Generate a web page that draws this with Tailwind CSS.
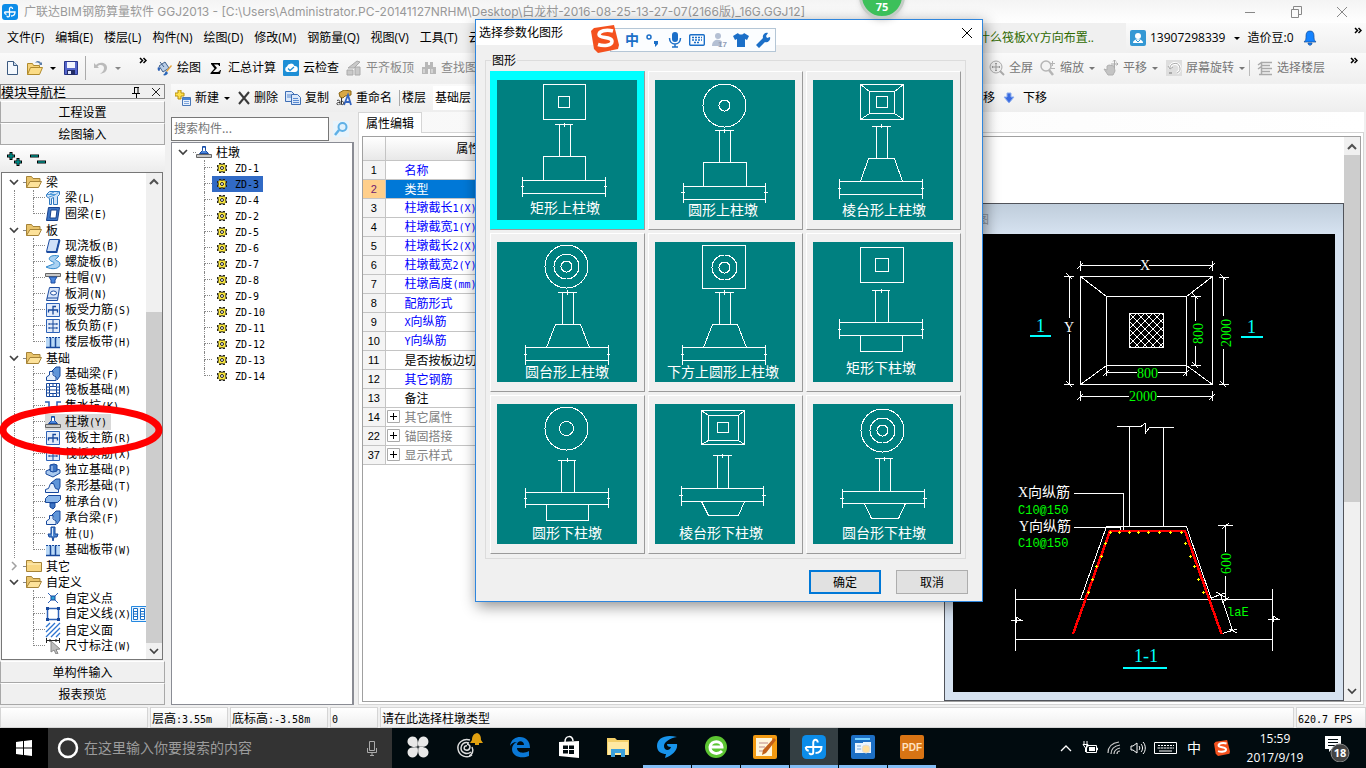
<!DOCTYPE html>
<html lang="zh-CN">
<head>
    <meta charset="UTF-8">
    <meta name="viewport" content="width=device-width, initial-scale=1.0">
    <title>广联达BIM钢筋算量软件 GGJ2013</title>
    <script src="https://cdn.jsdelivr.net/npm/@tailwindcss/browser@4"></script>
</head>
<body class="relative flex h-screen flex-col overflow-hidden bg-[#f0f0f0] font-['Open_Sans','Noto_Sans_CJK_SC',sans-serif] text-xs leading-4 text-black">
    <!-- Icon sprite -->
    <svg class="hidden" xmlns="http://www.w3.org/2000/svg">
        <symbol id="logo" viewBox="0 0 16 16"><rect width="16" height="16" rx="3" fill="#0c8ce8"/><path d="M10.500 5C10.500 2.500 7.500 2.500 7.500 5v6.500c0 1.800-2.500 1.800-2.500.3M2.500 8H13c0 2.500-1.500 4-4 4M2.500 8c0 1.500.8 2.300 2 2.500" fill="none" stroke="#fff" stroke-width="1.300"/></symbol>
        <symbol id="caret" viewBox="0 0 8 16"><path d="M1 7h6L4 10z" fill="currentColor"/></symbol>
        <symbol id="more" viewBox="0 0 8 8"><path d="M1 1l2.500 2.500L1 6M4.500 1L7 3.500 4.500 6" fill="none" stroke="currentColor" stroke-width="1.500"/></symbol>
        <symbol id="new" viewBox="0 0 16 16"><path d="M2.500 1.500h6l4 4v9h-10z" fill="#f4f8fd" stroke="#3c5a80"/><path d="M8.500 1.500v4h4" fill="#c8d8ec" stroke="#3c5a80"/></symbol>
        <symbol id="open" viewBox="0 0 16 16"><path d="M.5 14.500v-11h5l1 2h6v2" fill="#f5d27a" stroke="#b08a2c"/><path d="M.5 14.500l3-7h12l-3 7z" fill="#fbdc86" stroke="#b08a2c"/><path d="M8 3c2-3 5-2 6 0l1-1v3h-3l1-1c-1-1-3-2-5-1z" fill="#5b7da8"/></symbol>
        <symbol id="save" viewBox="0 0 16 16"><path d="M1.500 1.500h13v13h-13z" fill="#5566cc" stroke="#28358a"/><path d="M4 2h8v6H4z" fill="#f2f5ff"/><path d="M4 10h8v5H4z" fill="#222c66"/><path d="M5 11h3v3H5z" fill="#dfe5fa"/></symbol>
        <symbol id="undo" viewBox="0 0 16 16"><path d="M2 3v5h5L5.500 6.500C8 4 12 5 12 8s-2 4-4 6c5-1 7-3 7-6.500C15 3 8 1 4 5z" fill="#bbb"/></symbol>
        <symbol id="paint" viewBox="0 0 16 16"><path d="M2 6l6-4 4 6-6 4z" fill="#b9cde6" stroke="#41618c"/><path d="M3 2l4 5" stroke="#41618c"/><path d="M1 7c-1 2 0 4 1 4s1-2 1-3z" fill="#2f62b5"/><path d="M14 5l1 1-5 6-1-1z" fill="#e7a43a"/><path d="M9 11l2 2c-1 2-3 3-5 2 2-1 2-3 3-4z" fill="#2a66b8"/></symbol>
        <symbol id="sum" viewBox="0 0 16 16"><path d="M3 3h9v3h-1c0-1-1-1.500-2-1.500H6L9 8l-4 4h4.500c1.500 0 2-1 2.500-2h1l-1 4H2.500v-1L6.500 8.500 3 4z" fill="#000"/></symbol>
        <symbol id="cloud" viewBox="0 0 16 16"><rect width="16" height="16" rx="1" fill="#1e8fd6"/><path d="M4 12a3 3 0 0 1 0-5.500A4 4 0 0 1 11.500 6 3 3 0 0 1 12 12z" fill="#fff"/><path d="M5 8.500l2 2 4-3.500" fill="none" stroke="#1e8fd6" stroke-width="1.300"/></symbol>
        <symbol id="slab" viewBox="0 0 16 16"><path d="M2 8l9-7 3 1-6 6zM1 10h6v5H1zM9 7h5v8H9z" fill="#c9c9c9" stroke="#aaa"/></symbol>
        <symbol id="find" viewBox="0 0 16 16"><path d="M4 2h3v5H4zM9 2h3v5H9zM1 7h6v7H1zM9 7h6v7H9zM7 5h2v4H7z" fill="#b8b8b8"/><path d="M3 9v4M11 9v4" stroke="#eee"/></symbol>
        <symbol id="full" viewBox="0 0 16 16"><circle cx="7" cy="7" r="6" fill="#eee" stroke="#aaa"/><path d="M7 3v8M3 7h8M6 4l1-1 1 1M6 10l1 1 1-1M4 6L3 7l1 1M10 6l1 1-1 1" stroke="#999" fill="none"/><path d="M11 11l4 4" stroke="#aaa" stroke-width="2"/></symbol>
        <symbol id="zoom" viewBox="0 0 16 16"><circle cx="6" cy="6" r="5" fill="#f3f3f3" stroke="#b5b5b5" stroke-width="1.500"/><path d="M9 10l4 5" stroke="#b5b5b5" stroke-width="2.500"/><path d="M12.500 1v5M10 3.500h5M11 8.500h4" stroke="#b5b5b5"/></symbol>
        <symbol id="pan" viewBox="0 0 16 16"><path d="M1 9l3 1V6l2-1 5 1 1 5-2 4H5z" fill="#c4c4c4" stroke="#b0b0b0"/><path d="M11.500 0v8M8 4h7M10 1.500L11.500 0 13 1.500M13.500 2.500L15 4l-1.500 1.500" fill="none" stroke="#aaa"/></symbol>
        <symbol id="rotate" viewBox="0 0 16 16"><path d="M0 0h16v16H0z" fill="#dedede"/><path d="M4 9a5 5 0 1 1 7 4" fill="none" stroke="#fff" stroke-width="3"/><path d="M4 9a5 5 0 1 1 7 4M2 6l2 3 3-2" fill="none" stroke="#aaa"/><path d="M3 12h3v2H3z" fill="#aaa"/></symbol>
        <symbol id="floors" viewBox="0 0 16 16"><path d="M4 2.500h11M4 5.500h9M4 8.500h11M4 11.500h9M2 14.500h13M4.500 2v12M1 5l4-3M1 9l4-3" stroke="#aaa" stroke-width="1.500" fill="none"/></symbol>
        <symbol id="add" viewBox="0 0 16 16"><path d="M3 0h3v3h3v3H6v3H3V6H0V3h3z" fill="#ffe14d" stroke="#b8900f"/><path d="M7.500 7.500h8v8h-8z" fill="#eaf2fc" stroke="#4a78b8"/><path d="M8 8h7v2H8z" fill="#4a86d8"/><path d="M9 11.500h5M9 13.500h5" stroke="#7fa6dc"/></symbol>
        <symbol id="del" viewBox="0 0 12 16"><path d="M1 2l10 12M11 2L1 14" stroke="#3a3a3a" stroke-width="2"/></symbol>
        <symbol id="copy" viewBox="0 0 16 16"><path d="M.5 1.500h6l3 3v7h-9z" fill="#dbe8fa" stroke="#3f6fb5"/><path d="M6.500 4.500h6l3 3v7h-9z" fill="#dbe8fa" stroke="#3f6fb5"/><path d="M2 5h4M2 7h4M8 8.500h5M8 10.500h6M8 12.500h6" stroke="#5b8bd0"/></symbol>
        <symbol id="rename" viewBox="0 0 16 16"><path d="M3 3l5-3 7 1v4l-6 1-2 2-3-1z" fill="#d8a845" stroke="#8a6514"/><path d="M8 15l4-10 3 10M9.500 12h5" fill="none" stroke="#3465c0" stroke-width="1.800"/><path d="M1 10.500c3-1 3 0 3 4.500M4 12.500c-4-.5-4 2.500-1.500 2.200M5.500 8v6.500c3 1 3-4 0-3" fill="none" stroke="#333"/></symbol>
        <symbol id="down" viewBox="0 0 16 16"><path d="M6 3h4v4h3l-5 6-5-6h3z" fill="#3a6be0" stroke="#8fb0ee"/></symbol>
        <symbol id="user" viewBox="0 0 16 16"><rect width="16" height="16" rx="2" fill="#3498d4"/><circle cx="8" cy="6" r="3" fill="#fff"/><path d="M3 13c0-5 10-5 10 0z" fill="#fff"/><path d="M6 10l2 2 2-2" stroke="#3498d4" fill="none"/></symbol>
        <symbol id="bell" viewBox="0 0 16 16"><path d="M8 1c3 0 4 2 4 5 0 3 0 4 2 6H2c2-2 2-3 2-6 0-3 1-5 4-5zM6 13h4c0 3-4 3-4 0z" fill="#1583ff" stroke="#174e94" stroke-width=".7"/></symbol>
        <symbol id="chev-d" viewBox="0 0 12 16"><path d="M2 6l4 4 4-4" fill="none" stroke="#404040" stroke-width="1.700"/></symbol>
        <symbol id="chev-r" viewBox="0 0 12 16"><path d="M4 4l4 4-4 4" fill="none" stroke="#a0a0a0" stroke-width="1.500"/></symbol>
        <symbol id="chev-u" viewBox="0 0 12 16"><path d="M2 10l4-4 4 4" fill="none" stroke="#505050" stroke-width="2"/></symbol>
        <symbol id="folder-open" viewBox="0 0 16 16"><path d="M.5 13.500v-11h5l1.500 2h7v3" fill="#e9c46c" stroke="#a58338"/><path d="M.5 13.500l3.500-6h11.500l-3 6z" fill="#fde29a" stroke="#a58338"/></symbol>
        <symbol id="folder" viewBox="0 0 16 16"><path d="M.5 13.500v-11h5l1.500 2h8.500v9z" fill="#f8d682" stroke="#a58338"/><path d="M1 6h14" stroke="#fff0c0"/></symbol>
        <symbol id="t-beam" viewBox="0 0 16 16"><path d="M1.500 4.500l3-3h10v3l-2 2v8h-4v-7l-2 1v6h-2v-6l-3-2z" fill="#cfe3f8" stroke="#2e78c0"/><path d="M2 4.500h9l3-3M5 4l4-2M4 7l6-2" fill="none" stroke="#4c98d8"/></symbol>
        <symbol id="t-ring" viewBox="0 0 16 16"><path d="M3.500 1.500h11l-2 13h-11z" fill="#3c74c4" stroke="#17408c"/><path d="M6 4h6l-1 8H5z" fill="#fff" stroke="#17408c"/></symbol>
        <symbol id="t-slab" viewBox="0 0 16 16"><path d="M4.500 1.500h10l-3 12h-10z" fill="#cfe0f8" stroke="#1c4ca0"/><path d="M1.500 14h10l3-12" stroke="#1c4ca0" fill="none" stroke-width="2"/></symbol>
        <symbol id="t-spiral" viewBox="0 0 16 16"><path d="M14 2C5 0 2 5 6 7s5 2 0 4l-5 2c6 3 14 2 14-3 0-4-8-3-3-6z" fill="#a9d2f3" stroke="#3289cc"/></symbol>
        <symbol id="t-cap" viewBox="0 0 16 16"><path d="M.5 3.500h15v3H.5z" fill="#c8c8c8" stroke="#666"/><path d="M4 7h8l-2 3v3H6v-3z" fill="#4a86dc" stroke="#1c4ca0"/></symbol>
        <symbol id="t-hole" viewBox="0 0 16 16"><path d="M4.500 1.500h10l-2 13h-11z" fill="#d6e4f9" stroke="#1c4ca0"/><ellipse cx="8.500" cy="7" rx="3" ry="2" fill="#fff" stroke="#1c4ca0"/><path d="M2 12h11" stroke="#1c4ca0"/></symbol>
        <symbol id="t-rebar" viewBox="0 0 16 16"><path d="M1.500 1.500h13v13h-13z" fill="#e3ecfa" stroke="#2d62b8"/><path d="M11 4.500H8v8M3.500 10.500v-2.500h9v2.500" stroke="#17489c" stroke-width="1.300" fill="none"/></symbol>
        <symbol id="t-neg" viewBox="0 0 16 16"><path d="M1.500 1.500h13v13h-13z" fill="#e3ecfa" stroke="#2d62b8"/><path d="M8 2v12M4 6h8M4 10h8M4 5v2M12 5v2M4 9v2M12 9v2" stroke="#17489c"/></symbol>
        <symbol id="t-band" viewBox="0 0 16 16"><path d="M1 3h14v10H1z" fill="#b9d8f6"/><path d="M1 13.500h14" stroke="#17489c" stroke-width="1.500"/><path d="M5.500 4v9M10.500 4v9" stroke="#17489c" stroke-width="1.500"/><path d="M1 3.500h14" stroke="#17489c" stroke-dasharray="2 1"/></symbol>
        <symbol id="t-fbeam" viewBox="0 0 16 16"><path d="M7 5l4-4h4v9l-3 4" fill="#5f95d8" stroke="#17489c"/><path d="M1.500 14.500V11l3-2V5.500H8V9l3 2v3.500z" fill="#e6f0fc" stroke="#17489c"/></symbol>
        <symbol id="t-raft" viewBox="0 0 16 16"><path d="M1.500 1.500h13v13h-13zM4.500 4.500h7v7h-7z" fill="#fff" stroke="#17489c"/><path d="M4.500 1v3M8 1v3M11.500 1v3M4.500 12v3M8 12v3M11.500 12v3M1 5h3M1 8h3M1 11h3M12 5h3M12 8h3M12 11h3M5 8h6" stroke="#17489c"/></symbol>
        <symbol id="t-pit" viewBox="0 0 16 16"><path d="M0 4h4v8h8V4h4" fill="none" stroke="#2d62b8" stroke-width="1.500"/><path d="M6 9h4" stroke="#2d62b8"/></symbol>
        <symbol id="t-pier" viewBox="0 0 16 16"><path d="M3.500 9.500l3-3v-4h3v4l3 3z" fill="#4a86dc" stroke="#1c4ca0"/><path d="M7 4h2v3H7z" fill="#fff"/><path d="M.5 10.500h15v3H.5z" fill="#c8c8c8" stroke="#666"/></symbol>
        <symbol id="t-iso" viewBox="0 0 16 16"><path d="M1 9l7-3 7 2v3l-7 4-7-3z" fill="#a8c8ee" stroke="#17489c"/><path d="M5 3l4-1 3 1v6l-4 1-3-1z" fill="#3d74c4" stroke="#17489c"/><path d="M7 4v5" stroke="#cfe0f8"/></symbol>
        <symbol id="t-strip" viewBox="0 0 16 16"><path d="M6 5l5-4h4v8l-2 4" fill="#5f95d8" stroke="#17489c"/><path d="M.5 14.500v-3l3-1 2-5h3l2 5 3 1v3z" fill="#e6f0fc" stroke="#17489c"/></symbol>
        <symbol id="t-cap2" viewBox="0 0 16 16"><path d="M.5 4.500l3-3h12v4l-3 3H.5z" fill="#8bb7ea" stroke="#17489c"/><path d="M5 9h5v4l-2 2-3-2z" fill="#3d74c4" stroke="#17489c"/></symbol>
        <symbol id="t-pile" viewBox="0 0 16 16"><path d="M6 1h4v7h3l-1 3H9l-1 4-1-4H4L3 8h3z" fill="#4a82cc" stroke="#17489c"/><path d="M7 2h1v8H7z" fill="#dceafb"/></symbol>
        <symbol id="t-point" viewBox="0 0 16 16"><path d="M3 3l10 10M13 3L3 13" stroke="#2d62b8"/><path d="M6 6h4v4H6z" fill="#2aa0d8" stroke="#17489c"/></symbol>
        <symbol id="t-line" viewBox="0 0 16 16"><path d="M2.500 2.500h11v11h-11z" fill="none" stroke="#2d62b8" stroke-width="1.500"/><path d="M1 1h3v3H1zM12 1h3v3h-3zM1 12h3v3H1zM12 12h3v3h-3z" fill="#17489c"/></symbol>
        <symbol id="t-area" viewBox="0 0 16 16"><path d="M1 5l4-4M1 10l9-9M1 15L15 1M6 15l9-9M11 15l4-4" stroke="#2d74d0" stroke-width="1.300"/></symbol>
        <symbol id="t-dim" viewBox="0 0 16 16"><path d="M1.500 0v5M14.500 0v5M1 2.500h14M5 1v3M11 1v3" stroke="#222"/><path d="M6 3l9 8-4 .5 2 4-2 .5-2-4-3 2z" fill="#bdbdbd" stroke="#888"/></symbol>
        <symbol id="grid2" viewBox="0 0 16 16"><path d="M.5.5h15v15H.5z" fill="#e6f3ff" stroke="#2488e0"/><path d="M2.500 2.500h4v11h-4zM9.500 2.500h4v11h-4zM3 5.500h3M3 8h3M3 10.500h3M10 5.500h3M10 8h3M10 10.500h3" fill="#fff" stroke="#1b70c8"/></symbol>
        <symbol id="gear" viewBox="0 0 12 12"><path d="M4 1v10M8 1v10M1 4h10M1 8h10" stroke="#222" stroke-width="2"/><circle cx="6" cy="6" r="4" fill="#ffec3d" stroke="#222"/><path d="M4 2v8M8 2v8M2 4h8M2 8h8" stroke="#ffec3d"/><circle cx="6" cy="6" r="1.500" fill="#fff" stroke="#222"/></symbol>
        <symbol id="sogou" viewBox="0 0 28 28"><path d="M3 3l20-3 5 20-1 4-20 4-4-4L0 6z" fill="#f4511e"/><path d="M22 6c-7-2-14 0-14 3.500C8 14 21 11 21 16.500c0 4-8 5-14 3" fill="none" stroke="#fff" stroke-width="3.500"/></symbol>
    </svg>

    <!-- Title bar -->
    <header class="flex h-[23px] shrink-0 items-center bg-linear-to-b from-[#f4f4f4] to-white pl-[2px] text-[#999]">
        <svg class="mr-1.5 size-4"><use href="#logo"/></svg>
        <h1 class="flex-1 overflow-hidden font-['Inter','Noto_Sans_CJK_SC',sans-serif] text-xs whitespace-nowrap">广联达BIM钢筋算量软件 GGJ2013 - [C:\Users\Administrator.PC-20141127NRHM\Desktop\白龙村-2016-08-25-13-27-07(2166版)_16G.GGJ12]</h1>
        <div class="flex w-[122px] gap-[34px]">
            <button aria-label="最小化"><svg class="size-3" viewBox="0 0 12 12"><path d="M1 6.500h10" stroke="#888"/></svg></button>
            <button aria-label="还原"><svg class="size-3" viewBox="0 0 12 12"><path d="M1.500 3.500h7v8h-7zM3.500 3V.5h8v8H9" fill="none" stroke="#888"/></svg></button>
            <button aria-label="关闭"><svg class="size-3" viewBox="0 0 12 12"><path d="M1 1l10 10M11 1L1 11" stroke="#888"/></svg></button>
        </div>
    </header>

    <!-- Menu -->
    <div class="flex h-[30px] shrink-0 justify-between bg-[#f0f0f0]">
        <nav class="flex items-center gap-[11px] overflow-hidden pl-[7px] whitespace-nowrap">
            <button>文件(F)</button><button>编辑(E)</button><button>楼层(L)</button><button>构件(N)</button><button>绘图(D)</button><button>修改(M)</button><button>钢筋量(Q)</button><button>视图(V)</button><button>工具(T)</button><button>云</button>
        </nav>
        <div class="flex shrink-0">
            <a href="#" class="flex w-[160px] items-center justify-end pr-8 whitespace-nowrap text-[#2f6a00]">为什么筏板XY方向布置..</a>
            <div class="flex w-[240px] items-center bg-linear-to-b from-[#fbfbfb] to-[#efefef] pl-1">
                <svg class="size-4"><use href="#user"/></svg>
                <button class="ml-1 flex items-center gap-2">13907298339 <svg class="h-4 w-2"><use href="#caret"/></svg></button>
                <span class="ml-1.5">造价豆:0</span>
                <button class="ml-2" aria-label="通知"><svg class="size-4"><use href="#bell"/></svg></button>
                <button class="mr-1 ml-auto self-start pt-1" aria-label="更多"><svg class="size-2"><use href="#more"/></svg></button>
            </div>
        </div>
    </div>

    <!-- Main toolbar -->
    <div class="flex h-[30px] shrink-0 gap-0.5 bg-linear-to-b from-[#fafafa] to-[#efefef] whitespace-nowrap">
        <div class="flex w-[151px] items-center gap-1.5 pl-[5px]">
            <button aria-label="新建"><svg class="size-4"><use href="#new"/></svg></button>
            <button class="flex gap-1.5" aria-label="打开"><svg class="size-4"><use href="#open"/></svg><svg class="h-4 w-2"><use href="#caret"/></svg></button>
            <button aria-label="保存"><svg class="size-4"><use href="#save"/></svg></button>
            <span class="h-6 w-px bg-[#aaa]"></span>
            <button class="flex gap-1.5 text-[#888]" aria-label="撤销"><svg class="size-4"><use href="#undo"/></svg><svg class="h-4 w-2"><use href="#caret"/></svg></button>
            <button class="ml-auto self-start pt-1 pr-1" aria-label="更多"><svg class="size-2"><use href="#more"/></svg></button>
        </div>
        <div class="flex flex-1 items-center gap-[7px] overflow-hidden pl-1">
            <button class="flex gap-1"><svg class="size-4"><use href="#paint"/></svg>绘图</button>
            <button class="flex gap-1"><svg class="size-4"><use href="#sum"/></svg>汇总计算</button>
            <button class="flex gap-1"><svg class="size-4"><use href="#cloud"/></svg>云检查</button>
            <button class="flex gap-1 text-[#888]"><svg class="size-4"><use href="#slab"/></svg>平齐板顶</button>
            <button class="flex gap-1 text-[#888]"><svg class="size-4"><use href="#find"/></svg>查找图元</button>
        </div>
        <div class="flex items-center gap-[7px] pr-2 text-[#777]">
            <span class="h-4 w-px bg-[#aaa]"></span>
            <button class="flex gap-1"><svg class="size-4"><use href="#full"/></svg>全屏</button>
            <button class="flex gap-1"><svg class="size-4"><use href="#zoom"/></svg>缩放<svg class="h-4 w-2"><use href="#caret"/></svg></button>
            <button class="flex gap-1"><svg class="size-4"><use href="#pan"/></svg>平移<svg class="h-4 w-2"><use href="#caret"/></svg></button>
            <button class="flex gap-1"><svg class="size-4"><use href="#rotate"/></svg>屏幕旋转<svg class="-mr-1 h-4 w-2"><use href="#caret"/></svg></button>
            <span class="h-4 w-px bg-[#bbb]"></span>
            <button class="flex gap-1"><svg class="size-4"><use href="#floors"/></svg>选择楼层</button>
            <button class="ml-[18px] self-start pt-1 text-black" aria-label="更多"><svg class="size-2"><use href="#more"/></svg></button>
        </div>
    </div>

    <div class="flex min-h-0 flex-1 gap-1.5 pt-px">
        <!-- Module navigation -->
        <aside class="flex w-[165px] shrink-0 flex-col font-['Noto_Sans_CJK_SC',sans-serif]">
            <div class="flex h-[15px] items-center border border-[#888]">
                <h2 class="flex-1 text-[13px]">模块导航栏</h2>
                <button class="mr-2" aria-label="固定"><svg class="size-3" viewBox="0 0 12 12"><path d="M4 1.500h5M4.500 1v6M8 1v6M2 7.500h8M6.500 8v4" fill="none" stroke="#000"/></svg></button>
                <button class="mr-0.5" aria-label="关闭"><svg class="size-3" viewBox="0 0 12 12"><path d="M2 2l8 8M10 2l-8 8" stroke="#222"/></svg></button>
            </div>
            <button class="mt-0.5 h-[22px] border border-[#a8a8a8] border-t-white">工程设置</button>
            <button class="h-[22px] border border-[#a8a8a8] border-t-white">绘图输入</button>
            <div class="flex h-[27px] shrink-0 items-center gap-1.5 bg-linear-to-b from-white to-[#ececec] pl-[6px]">
                <button aria-label="全部展开"><svg class="h-4 w-[18px]" viewBox="0 0 18 16"><path d="M5 1v8M1 5h8M12 7v8M8 11h8" stroke="#000" stroke-width="3"/><path d="M5 2v6M2 5h6M12 8v6M9 11h6" stroke="#00908a" stroke-width="1.500"/></svg></button>
                <button aria-label="全部折叠"><svg class="h-4 w-[18px]" viewBox="0 0 18 16"><path d="M0 5h9M7 11h9" stroke="#000" stroke-width="3"/><path d="M1 5h7M8 11h7" stroke="#00908a" stroke-width="1.500"/></svg></button>
            </div>
            <div class="mr-0.5 ml-px flex min-h-0 flex-1 overflow-hidden border border-[#777] bg-white">
                <ul id="module-tree" class="min-w-0 flex-1 overflow-hidden pt-px whitespace-nowrap"></ul>
                <div class="flex w-4 flex-col items-center bg-[#f0f0f0]">
                    <svg class="mt-px h-4 w-3"><use href="#chev-u"/></svg>
                    <div class="mt-[122px] w-full flex-1 bg-[#cdcdcd]"></div>
                    <svg class="h-4 w-3"><use href="#chev-d"/></svg>
                </div>
            </div>
            <button class="mt-px h-[22px] border border-[#a8a8a8] border-t-white">单构件输入</button>
            <button class="mb-0.5 h-[22px] border border-[#a8a8a8] border-t-white">报表预览</button>
        </aside>

        <div class="flex min-w-0 flex-1 flex-col">
            <!-- Component toolbar -->
            <div class="flex h-7 shrink-0 items-center justify-between bg-linear-to-b from-[#fafafa] to-[#eeeeee] whitespace-nowrap">
                <div class="flex items-center gap-[7px] pl-1">
                    <button class="flex gap-1"><svg class="size-4"><use href="#add"/></svg>新建<svg class="h-4 w-2"><use href="#caret"/></svg></button>
                    <button class="flex gap-1"><svg class="h-4 w-3"><use href="#del"/></svg>删除</button>
                    <button class="flex gap-1"><svg class="size-4"><use href="#copy"/></svg>复制</button>
                    <button class="flex gap-1"><svg class="size-4"><use href="#rename"/></svg>重命名</button>
                    <label for="floor" class="border-l border-[#aaa] pl-0.5">楼层</label>
                    <select id="floor" class="h-6 w-24 appearance-none bg-white pl-0.5"><option>基础层</option></select>
                </div>
                <div class="flex items-center gap-1.5 pr-[319px]">
                    <button>上移</button>
                    <button class="flex gap-1.5"><svg class="size-4"><use href="#down"/></svg>下移</button>
                </div>
            </div>

            <div class="flex min-h-0 flex-1 gap-1 pb-0.5">
                <!-- Component list -->
                <section class="flex w-[183px] shrink-0 flex-col pt-[5px] font-['Noto_Sans_CJK_SC',sans-serif]">
                    <div class="flex items-center gap-1 pb-px">
                        <input type="text" aria-label="搜索构件" placeholder="搜索构件..." class="h-6 w-[158px] border border-[#777] bg-white pb-1 pl-0.5 text-xs placeholder:text-[#777]">
                        <button class="bg-[#e8f4fc]" aria-label="搜索"><svg class="size-4" viewBox="0 0 16 16"><circle cx="9.500" cy="6" r="4" fill="#dff1fd" stroke="#5fb0e6" stroke-width="2"/><path d="M6 9l-4 5" stroke="#5fb0e6" stroke-width="2.500"/></svg></button>
                    </div>
                    <ul id="component-list" class="flex-1 border border-r-2 border-[#8a8c94] bg-white pt-px"></ul>
                </section>

                <!-- Properties and drawing -->
                <section class="flex min-w-0 flex-1 flex-col pr-0.5 font-['Noto_Sans_CJK_SC',sans-serif]">
                    <div class="flex h-5 bg-linear-to-r from-[#f8f8f8] to-white">
                        <button class="relative -mb-px h-[21px] w-16 border border-b-0 border-[#d5d5d5] bg-white">属性编辑</button>
                    </div>
                    <div class="flex min-h-0 flex-1 border border-[#d5d5d5] bg-white p-[3px] pr-0.5 pb-0.5">
                        <div class="flex min-w-0 flex-1 border border-[#a0a0a0]">
                            <div class="min-w-0 flex-1">
                                <table class="w-[212px] table-fixed border-collapse">
                                    <thead>
                                        <tr class="h-[23px] bg-linear-to-b from-white to-[#e8e8e8]"><th class="w-[22px] border-r border-b border-[#c4c4c4]"></th><th class="border-b border-[#c4c4c4] font-normal">属性名称</th></tr>
                                    </thead>
                                    <tbody id="props"></tbody>
                                </table>
                            </div>
                            <!-- Drawing window -->
                            <div class="mt-[66px] flex w-[400px] shrink-0 flex-col border border-[#50535a] bg-[#d6e2f0] px-2">
                                <h2 class="-mx-2 flex h-[30px] items-center bg-linear-to-b from-[#bfcddb] to-[#d6e2f0] pl-2 text-[#8d969f]">参数图</h2>
                                <svg id="drawing" class="w-full flex-1 bg-black" viewBox="953 234 382 458" preserveAspectRatio="xMidYMin meet" font-family="Liberation Serif, Noto Sans CJK SC, serif" shape-rendering="crispEdges">
                                    <defs>
                                        <pattern id="hatch" width="8" height="8" x="1129" y="313" patternUnits="userSpaceOnUse"><path d="M0 0l8 8M8 0L0 8" stroke="#fff"/></pattern>
                                    </defs>
                                    <g fill="none" stroke="#fff">
                                        <!-- plan -->
                                        <path d="M1080.500 276.500h132v108h-132zM1106.500 296.500h80v69h-80zM1080.500 276.500l26 20M1212.500 276.500l-26 20M1080.500 384.500l26-19M1212.500 384.500l-26-19"/>
                                        <path d="M1129.500 313.500h34v34h-34z" fill="url(#hatch)"/>
                                        <path d="M1080.500 265.500H1141M1149 265.500h63.500M1080.500 261v10M1212.500 261v10M1077 269l6-6M1209 269l6-6"/>
                                        <path d="M1080.500 396.500H1129M1157 396.500h55.500M1080.500 391v10M1212.500 391v10M1077 400l6-6M1209 400l6-6"/>
                                        <path d="M1106.500 372.500h30M1158 372.500h28.500M1106.500 366v10M1186.500 366v10M1103 376l6-6M1183 376l6-6"/>
                                        <path d="M1069.500 276.500V318M1069.500 334v50.500M1064 276.500h10M1064 384.500h10M1066 273l6 6M1066 381l6 6"/>
                                        <path d="M1195.500 296.500V321M1195.500 346v19.500M1191 296.500h10M1191 365.500h10M1192 293l6 6M1192 362l6 6"/>
                                        <path d="M1223.500 277.500V316M1223.500 349v35.500M1219 277.500h10M1219 384.500h10M1220 274l6 6M1220 381l6 6"/>
                                        <!-- section -->
                                        <path d="M1117 426.500h24l4-3v10l5-6.500h24M1129.500 427v99M1163.500 427v99"/>
                                        <path d="M1080.500 599.500l26-73h80l25 73M1015.500 599.500h257M1015.500 639.500h257M1015.500 589v62M1272.500 589v62"/>
                                        <path d="M1011 620h10l-5-3v6M1268 619h10l-5-3v6"/>
                                        <path d="M1074 493.500h49.500v37M1074 527.500h46.500v4"/>
                                        <path d="M1225.500 525.500v26M1225.500 576v23.500M1218 525.500h15M1222 529l7-6M1222 603l7-6M1211 598l14-5M1220.500 594l12 37M1221 634l16-5M1229 629l8 4M1216 592l9 5"/>
                                    </g>
                                    <path d="M1073 634l37-103h75l36.500 103" fill="none" stroke="red" stroke-width="2.500"/>
                                    <path id="dots" fill="#ff0"/>
                                    <g fill="#0ff"><path d="M1030 335h21v2h-21zM1241 336h22v2h-22zM1123 667h44v2h-44z"/>
                                        <text x="1036" y="332" font-size="18">1</text><text x="1247" y="333" font-size="18">1</text><text x="1134" y="662" font-size="18">1-1</text></g>
                                    <g fill="#fff" font-size="14"><text x="1140" y="270">X</text><text x="1064" y="332">Y</text><text x="1018" y="497">X向纵筋</text><text x="1019" y="531">Y向纵筋</text></g>
                                    <g fill="#0f0" font-size="14" font-family="Liberation Serif, serif">
                                        <text x="1137" y="378">800</text><text x="1129" y="401">2000</text>
                                        <text transform="translate(1203 344) rotate(-90)">800</text><text transform="translate(1231 347) rotate(-90)">2000</text><text transform="translate(1231 574) rotate(-90)">600</text>
                                        <g font-size="12" font-family="Liberation Mono, monospace"><text x="1018" y="514">C10@150</text><text x="1018" y="547">C10@150</text><text x="1227" y="616">laE</text></g>
                                    </g>
                                </svg>
                                <div class="h-2"></div>
                            </div>
                            <div class="flex w-4 flex-col items-center bg-[#f0f0f0]">
                                <svg class="mt-0.5 h-4 w-3"><use href="#chev-u"/></svg>
                                <div class="h-[347px] w-full bg-[#cdcdcd]"></div>
                                <svg class="mt-auto mb-0.5 h-4 w-3"><use href="#chev-d"/></svg>
                            </div>
                        </div>
                    </div>
                </section>
            </div>
        </div>
    </div>

    <!-- Status bar -->
    <footer id="status" class="flex h-[21px] shrink-0 gap-0.5 bg-[#f0f0f0] font-['Noto_Sans_CJK_SC',sans-serif] *:border *:border-[#d5d5d5] *:bg-linear-to-b *:from-white *:to-[#efefef] *:px-px *:leading-5 *:whitespace-nowrap">
        <span class="w-[148px]"></span>
        <span class="w-[78px]" data-text="层高:3.55m"></span>
        <span class="w-[98px]" data-text="底标高:-3.58m"></span>
        <span class="w-[48px]" data-text="0"></span>
        <span class="flex-1" data-text="请在此选择柱墩类型"></span>
        <span class="w-[70px]" data-text="620.7 FPS"></span>
    </footer>

    <!-- Taskbar -->
    <div class="flex h-10 shrink-0 bg-[#010b0f] text-white">
        <button class="flex w-12 items-center justify-center bg-black" aria-label="开始"><svg class="size-4" viewBox="0 0 16 16"><path d="M0 2l7-1v6.500H0zM8 1l8-1v7.500H8zM0 8.500h7V15l-7-1zM8 8.500h8V16l-8-1z" fill="#fff"/></svg></button>
        <label class="flex w-[344px] items-center gap-1 bg-[#333] pl-2">
            <svg class="size-6" viewBox="0 0 24 24"><circle cx="12" cy="12" r="9" fill="none" stroke="#fff" stroke-width="2.500"/></svg>
            <input type="text" placeholder="在这里输入你要搜索的内容" aria-label="搜索" class="min-w-0 flex-1 bg-transparent text-sm placeholder:text-[#9c9c9c]">
            <svg class="mr-3 size-4" viewBox="0 0 16 16"><path d="M5.500 1.500h5v9h-5zM3.500 8v4.500h9V8M8 12.500v3M6 15.500h4" fill="none" stroke="#aaa"/></svg>
        </label>
        <div class="flex gap-px pl-0.5 *:flex *:w-12 *:items-center *:justify-center *:border-b-3">
            <button class="border-transparent" aria-label="风车"><svg class="size-6" viewBox="0 0 24 24"><path d="M11.500 11.500C7 13 1 11 1.500 6S9 0 11 4c1 2 1 5 .5 7.500zM12.500 11.500c-1.500-4.500.5-10.500 5.500-10S24 9 20 11c-2 1-5 1-7.500.500zM12.500 12.500c4.500-1.500 10.500.5 10 5.500S15 24 13 20c-1-2-1-5-.5-7.500zM11.500 12.500c1.500 4.500-.5 10.500-5.500 10S0 15 4 13c2-1 5-1 7.500-.5z" fill="#e8e8e8"/></svg></button>
            <button class="border-transparent" aria-label="提醒"><svg class="h-8 w-8" viewBox="0 0 32 32"><path d="M19 9c-7-2-13 3-12 9 1 7 9 10 14 6M18 12c-5-2-8 2-8 5 0 5 6 7 10 4M16 15c-3-1-4 4-1 4 4 1 6-5 1-6M21 16c2 4 0 8-3 9" fill="none" stroke="#ddd" stroke-width="1.500"/><path d="M26 2c4 1 4 5 4 7l2 3H19l2-3c0-3 1-6 5-7zM24 12h4v2h-4z" fill="#e0a010"/></svg></button>
            <button class="ml-1 border-transparent" aria-label="Edge"><svg class="size-6" viewBox="0 0 24 24"><path d="M2 11C3 4 8 2 12 2c6 0 10 4 10 11H9c0 5 7 6 12 3v5C14 24 4 22 4 14c0-3 2-6 5-7-4 0-6 2-7 4zm7-1h7c0-5-7-5-7 0z" fill="#0a78d6"/></svg></button>
            <button class="border-transparent" aria-label="应用商店"><svg class="size-6" viewBox="0 0 24 24"><path d="M2 7l20-1v17L2 21z" fill="#fff"/><path d="M8 7c0-7 8-7 8-1" fill="none" stroke="#fff" stroke-width="1.500"/><path d="M6 10.500h5V14H6zM12 10.500h5V14h-5zM6 15h5v3.500H6zM12 15h5v4h-5z" fill="#010b0f"/></svg></button>
            <button class="border-transparent" aria-label="文件资源管理器"><svg class="size-6" viewBox="0 0 24 24"><path d="M1 3h8l2 2h12v15H1z" fill="#f3cf68"/><path d="M2 7h20v13H2z" fill="#ffe9a2"/><path d="M5 22v-8h14v8h-4v-4H9v4z" fill="#3aa0dc"/></svg></button>
            <button class="border-[#83bdf5]" aria-label="广联达"><svg class="size-6" viewBox="0 0 24 24"><path d="M22 2C12-1 2 2 2 11c0 6 5 8 9 8l-1 4c8-3 13-8 12-14H12c0 2 1 3 4 3-1 4-7 4-7-1 0-4 6-8 13-9z" fill="#1894ec"/></svg></button>
            <button class="border-[#83bdf5]" aria-label="浏览器"><svg class="size-6" viewBox="0 0 24 24"><circle cx="12" cy="12" r="11" fill="#5cc432"/><path d="M6 12h12c0-7-11-7-12 0 0 7 8 8 12 4" fill="none" stroke="#fff" stroke-width="3"/></svg></button>
            <button class="border-[#83bdf5]" aria-label="笔记"><svg class="size-6" viewBox="0 0 24 24"><rect width="24" height="24" rx="2" fill="#f29a12"/><path d="M3 3h16v18H3z" fill="#fff6dc"/><path d="M6 8h9M6 12h6M6 16h4" stroke="#b88"/><path d="M21 3l2 2-10 13-4 2 1-5z" fill="#c2601a"/></svg></button>
            <button class="border-[#83bdf5] bg-[#343f43]" aria-label="GGJ2013"><svg class="size-6"><use href="#logo"/></svg></button>
            <button class="border-[#83bdf5]" aria-label="图集"><svg class="size-6" viewBox="0 0 24 24"><rect width="24" height="24" rx="2" fill="#1d6fc4"/><path d="M4 8h8v10H4zM12 7h8v11h-8z" fill="#e9f4ff"/><path d="M6 11h4M6 14h4" stroke="#7aa8dc"/><circle cx="15" cy="14" r="4" fill="#ffe0a0" stroke="#ddd"/><path d="M4 4h15" stroke="#73d0ff" stroke-width="2"/></svg></button>
            <button class="border-[#83bdf5]" aria-label="PDF"><svg class="size-6" viewBox="0 0 24 24"><rect width="24" height="24" rx="2" fill="#d87414"/><text x="12" y="16" text-anchor="middle" font-size="10" font-weight="bold" font-family="Liberation Sans" fill="#ffe2c0">PDF</text></svg></button>
        </div>
        <div class="ml-auto flex items-center gap-2">
            <button aria-label="显示隐藏的图标"><svg class="size-4" viewBox="0 0 16 16"><path d="M3 11l5-5 5 5" fill="none" stroke="#fff" stroke-width="1.300"/></svg></button>
            <svg class="size-4" viewBox="0 0 16 16"><path d="M4.500 5.500h10v7h-10zM14.500 8h1v2h-1M2 1v3M5 1v3M1 4.500h5v2L3.500 8zM3.500 8v4" fill="none" stroke="#fff"/><path d="M7 7h6v4H7z" fill="#fff"/></svg>
            <svg class="size-4" viewBox="0 0 16 16"><path d="M2 13C2 7 6 3 13 2M5 14c0-5 3-8 9-9M8 14c0-3 2-5 6-6M11 14c0-2 1-3 3-3" fill="none" stroke="#ccc" stroke-width="1.200"/></svg>
            <svg class="size-4" viewBox="0 0 16 16"><path d="M1 6h2l4-3v10l-4-3H1zM9 6c1 1 1 3 0 4M11 4c2 2 2 6 0 8M13 2c3 3 3 9 0 12" fill="none" stroke="#fff"/></svg>
            <svg class="h-4 w-6" viewBox="0 0 24 16"><path d="M.5 2.500h22v11H.5zM3 5.500h17M3 8h17M5 11h13" fill="none" stroke="#fff"/><path d="M3 5.500h17M3 8h17" stroke="#010b0f" stroke-dasharray="1 2"/></svg>
            <span class="w-4 text-center text-sm">中</span>
            <svg class="mx-1 size-4"><use href="#sogou"/></svg>
            <button class="w-[66px] text-center text-xs leading-[19px]">15:59<br>2017/9/19</button>
            <button class="flex h-10 w-[50px] items-center pl-2" aria-label="操作中心"><svg class="h-7 w-8" viewBox="0 0 32 28"><path d="M1 2h16v13H8l-3 3v-3H1z" fill="#fff"/><path d="M4 5.500h10M4 8.500h10M4 11.500h7" stroke="#010b0f"/><circle cx="16" cy="19" r="9" fill="#444" stroke="#888"/><text x="16" y="23" text-anchor="middle" font-size="11" font-weight="bold" font-family="Open Sans" fill="#fff">18</text></svg></button>
        </div>
    </div>

    <!-- Shape picker dialog -->
    <div role="dialog" aria-labelledby="dlg-title" class="absolute top-[19px] left-[475px] w-[508px] border border-[#2f86dd] bg-[#f0f0f0] shadow-[2px_4px_14px_rgba(0,0,0,0.45)]">
        <div class="flex h-[25px] items-center justify-between bg-white pr-[9px] pl-[3px]">
            <h2 id="dlg-title">选择参数化图形</h2>
            <button aria-label="关闭"><svg class="size-3" viewBox="0 0 12 12"><path d="M1 1l10 10M11 1L1 11" stroke="#000"/></svg></button>
        </div>
        <fieldset class="mx-[9px] mt-[7px] w-[481px] border border-[#dcdcdc] px-1 pb-1 font-['Noto_Sans_CJK_SC',sans-serif]">
            <legend class="ml-px px-px">图形</legend>
            <div id="shapes" class="grid grid-cols-[repeat(3,155px)] gap-[3px] pt-[3px]"></div>
        </fieldset>
        <div class="flex justify-end gap-[15px] px-[14px] pt-[11px] pb-[7px] font-['Noto_Sans_CJK_SC',sans-serif]">
            <button class="h-6 w-[72px] border-2 border-[#0078d7] bg-[#e1e1e1]">确定</button>
            <button class="h-6 w-[72px] border border-[#adadad] bg-[#e1e1e1]">取消</button>
        </div>
    </div>

    <!-- Input method bar -->
    <div class="absolute top-[28px] left-[610px] flex h-6 w-[166px] items-center gap-1.5 border border-[#b4c6d6] bg-[#fbfdff] pl-[14px] font-bold text-[#1b6fc8]">
        <svg class="absolute -top-1 -left-5 size-7"><use href="#sogou"/></svg>
        <span class="text-sm">中</span>
        <svg class="size-4" viewBox="0 0 16 16"><circle cx="4" cy="5" r="2" fill="none" stroke="#1b6fc8" stroke-width="1.500"/><path d="M9 9h4v3l-3 3v-3H9z" fill="#1b6fc8"/></svg>
        <svg class="size-4" viewBox="0 0 16 16"><rect x="5" width="6" height="10" rx="3" fill="#1b6fc8"/><path d="M2.500 6c0 8 11 8 11 0M8 12v3M5 15h6" fill="none" stroke="#1b6fc8" stroke-width="1.500"/></svg>
        <svg class="size-4" viewBox="0 0 16 16"><rect x=".7" y="2.700" width="14.600" height="10.600" rx="1" fill="none" stroke="#1b6fc8" stroke-width="1.400"/><path d="M3 5.500h10M3 8h10M5 10.500h6" stroke="#1b6fc8" stroke-width="1.400" stroke-dasharray="2 1"/></svg>
        <svg class="size-4" viewBox="0 0 16 16"><circle cx="7" cy="4" r="3" fill="#b4c0d4"/><path d="M1 14c0-8 9-7 10-4l-1 4z" fill="#b4c0d4"/><text x="7" y="15" font-size="8" font-family="Liberation Sans" fill="#8f9db8">17</text></svg>
        <svg class="size-4" viewBox="0 0 16 16"><path d="M5 1c1 2 5 2 6 0l5 3-2 4-2-1v8H4V7L2 8 0 4z" fill="#1b6fc8"/></svg>
        <svg class="size-4" viewBox="0 0 16 16"><path d="M1 13l7-7c-1-3 2-6 5-5l-2 3 1 2 3-1c1 3-2 6-5 5l-6 6z" fill="#1b6fc8"/></svg>
    </div>

    <!-- Floating speed ball -->
    <div class="absolute -top-[27px] left-[859px] flex h-[46px] w-[46px] items-end justify-center rounded-full border-3 border-[#c4cdc6] bg-[#3cc05a] pb-[1px] text-[11px] font-bold text-white shadow-md">75</div>

    <!-- Highlight ring -->
    <svg class="pointer-events-none absolute top-[402px] left-0 h-14 w-[166px]" viewBox="0 0 166 56"><ellipse cx="81" cy="28" rx="78" ry="22" fill="none" stroke="red" stroke-width="7"/></svg>

    <script>
        // Latin runs take half the width of a CJK character
        const mixed = text => text.replace(/[ -~]+/g, s => `<span class="font-['DejaVu_Sans_Mono',monospace] text-[10px]">${s}</span>`);
        const icon = (id, cls = 'size-4') => `<svg class="${cls} shrink-0"><use href="#${id}"/></svg>`;

        const modules = [
            ['梁', true, [['beam', '梁(L)'], ['ring', '圈梁(E)']]],
            ['板', true, [['slab', '现浇板(B)'], ['spiral', '螺旋板(B)'], ['cap', '柱帽(V)'], ['hole', '板洞(N)'], ['rebar', '板受力筋(S)'], ['neg', '板负筋(F)'], ['band', '楼层板带(H)']]],
            ['基础', true, [['fbeam', '基础梁(F)'], ['raft', '筏板基础(M)'], ['pit', '集水坑(K)'], ['pier', '柱墩(Y)'], ['rebar', '筏板主筋(R)'], ['neg', '筏板负筋(X)'], ['iso', '独立基础(P)'], ['strip', '条形基础(T)'], ['cap2', '桩承台(V)'], ['fbeam', '承台梁(F)'], ['pile', '桩(U)'], ['band', '基础板带(W)']]],
            ['其它', false, []],
            ['自定义', true, [['point', '自定义点'], ['line', '自定义线(X)'], ['area', '自定义面'], ['dim', '尺寸标注(W)']]],
        ];

        document.getElementById('module-tree').innerHTML = modules.map(([name, open, items], g) => `
            <li>
                <button class="flex h-4 items-center pl-[6px]">
                    ${icon(open ? 'chev-d' : 'chev-r', 'h-4 w-3')}<span class="mr-px ml-[3px] w-[2px] border-b border-dotted border-[#888]"></span>
                    ${icon(open ? 'folder-open' : 'folder')}<span class="ml-1">${name}</span>
                </button>
                <ul>${items.map(([ic, label], i) => `
                    <li class="flex h-4">
                        <span class="ml-3 w-[19px] shrink-0 ${g < 4 ? 'border-l border-dotted border-[#888]' : ''}"></span>
                        <span class="w-3 shrink-0">
                            <span class="block h-2 border-b border-l border-dotted border-[#888]"></span>
                            ${i < items.length - 1 ? '<span class="block h-2 border-l border-dotted border-[#888]"></span>' : ''}
                        </span>
                        <button class="flex h-4 items-center gap-1 ${label === '柱墩(Y)' ? 'bg-[#d9d9d9] pr-1' : ''}">${icon('t-' + ic)}<span>${mixed(label)}</span></button>
                        ${ic === 'line' ? icon('grid2', 'size-4') : ''}
                    </li>`).join('')}
                </ul>
            </li>`).join('');

        const components = [1, 3, 4, 2, 5, 6, 7, 8, 9, 10, 11, 12, 13, 14];
        document.getElementById('component-list').innerHTML = `
            <li><button class="flex h-4 items-center pl-[5px]">${icon('chev-d', 'h-4 w-3')}<span class="ml-1 w-[3px] border-b border-dotted border-[#888]"></span>${icon('t-pier')}<span class="ml-1">柱墩</span></button></li>` +
            components.map((n, i) => `
            <li class="flex h-4 pl-8">
                <span class="w-2">
                    <span class="block h-2 border-b border-l border-dotted border-[#888]"></span>
                    ${i < components.length - 1 ? '<span class="block h-2 border-l border-dotted border-[#888]"></span>' : ''}
                </span>
                <button class="flex items-center gap-[7px] pr-1 pl-1 ${n === 3 ? 'bg-[#316ac5]' : ''}">${icon('gear', 'size-3')}<span>${mixed('ZD-' + n)}</span></button>
            </li>`).join('');

        const props = [
            [1, '名称'], [2, '类型'], [3, '柱墩截长1(X)'], [4, '柱墩截宽1(Y)'], [5, '柱墩截长2(X)'], [6, '柱墩截宽2(Y)'],
            [7, '柱墩高度(mm)'], [8, '配筋形式'], [9, 'X向纵筋'], [10, 'Y向纵筋'], [11, '是否按板边切'], [12, '其它钢筋'],
            [13, '备注'], [14, '其它属性'], [22, '锚固搭接'], [37, '显示样式'],
        ];
        const propColor = n => n === 2 ? 'bg-[#0078d7] text-white' : n >= 14 ? 'text-[#808080]' : n === 11 || n === 13 ? 'text-black' : 'text-[#0000ff]';
        document.getElementById('props').innerHTML = props.map(([n, label]) => `
            <tr class="h-[19px]">
                <td class="border-r border-b border-[#c4c4c4] text-center font-['Liberation_Sans',sans-serif] text-[11px] ${n === 2 ? 'bg-[#ffcf8b] text-[#702070]' : 'bg-[#f4f4f4]'}">${n}</td>
                <td class="border-b border-[#c4c4c4] ${propColor(n)}">
                    <div class="flex h-[18px] items-center">
                        <span class="flex w-[19px] pl-px">${n >= 14 ? '<svg class="size-[13px]" viewBox="0 0 13 13"><path d="M.5.5h12v12H.5z" fill="#fff" stroke="#aaa"/><path d="M3 6.500h7M6.500 3v7" stroke="#000"/></svg>' : ''}</span>
                        <span>${mixed(label)}</span>
                    </div>
                </td>
            </tr>`).join('');

        // Line work of every shape: path, circles [cx, cy, r], caption x and baseline
        const shapes = [
            ['矩形上柱墩', 'M46.500 4.500h42v35h-42zM61.500 16.500h11v11h-11zM58 44.500h18M67.500 43v4M62.500 44v32M73.500 44v32M46.500 100.500v-24h42v24M25.500 100.500h83M25.500 113.500h83M25.500 97v20M108.500 97v20M24 106.500h3M107 106.500h3', [], 33, 133],
            ['圆形上柱墩', 'M60 50.500h19M69.500 49v4M64.500 50v32M75.500 50v32M48.500 106.500v-24h43v24M28.500 106.500h82M28.500 119.500h82M28.500 103v20M110.500 103v20M26 112.500h4M109 112.500h4', [[69.5, 25.5, 21.5], [69.5, 25.5, 5.5]], 33, 135],
            ['棱台形上柱墩', 'M47.500 4.500h43v35h-43zM56.500 11.500h25v22h-25zM63.500 16.500h11v11h-11zM47.500 4.500l9 7M90.500 4.500l-9 7M47.500 39.500l9-6M90.500 39.500l-9-6M59 46.500h19M68.500 44v4M63.500 46v32M74.500 46v32M47.500 101.500l8-23h26l8 23M26.500 101.500h83M26.500 114.500h83M26.500 99v20M109.500 99v20M25 108.500h3M108 108.500h3', [], 29, 135],
            ['圆台形上柱墩', 'M61 50.500h19M70.500 48v5M65.500 50v32M76.500 50v32M49.500 105.500l9-23h25l9 23M28.500 105.500h83M28.500 118.500h83M28.500 103v20M111.500 103v20M27 112.500h3M110 112.500h3', [[69.5, 24.5, 21.5], [69.5, 24.5, 12.5], [69.5, 24.5, 5.5]], 28, 135],
            ['下方上圆形上柱墩', 'M47.500 3.500h43v43h-43zM60 50.500h19M69.500 48v5M64.500 50v32M75.500 50v32M48.500 105.500l9-23h25l9 23M27.500 105.500h83M27.500 118.500h83M27.500 103v20M110.500 103v20M26 112.500h3M109 112.500h3', [[69.5, 25.5, 12.5], [69.5, 25.5, 5.5]], 12, 135],
            ['矩形下柱墩', 'M47.500 5.500h43v35h-43zM62.500 16.500h13v13h-13zM59 48.500h18M68.500 47v4M62.500 48v32M75.500 48v32M26.500 80.500h83M26.500 93.500h83M26.500 77v20M109.500 77v20M25 87.500h3M108 87.500h3M47.500 93.500v16h42v-16', [], 33, 131],
            ['圆形下柱墩', 'M61 56.500h18M70.500 54v4M64.500 56v32M77.500 56v32M28.500 88.500h83M28.500 100.500h83M28.500 84v20M111.500 84v20M27 94.500h3M110 94.500h3M49.500 100.500v16h42v-16', [[69.5, 24.5, 21.5], [69.5, 24.5, 7]], 35, 134],
            ['棱台形下柱墩', 'M46.500 6.500h43v34h-43zM53.500 11.500h30v25h-30zM62.500 18.500h11v10h-11zM46.500 6.500l7 5M89.500 6.500l-6 5M46.500 40.500l7-4M89.500 40.500l-6-4M58 51.500h19M67.500 50v4M62.500 51v33M73.500 51v33M26.500 84.500h82M26.500 97.500h82M26.500 82v20M108.500 82v20M24 91.500h4M107 91.500h4M46.500 97.500l7 14h30l6-14', [], 24, 134],
            ['圆台形下柱墩', 'M62 54.500h18M71.500 53v4M66.500 54v33M77.500 54v33M29.500 87.500h82M29.500 99.500h82M29.500 85v19M111.500 85v19M27 94.500h4M110 94.500h4M51.500 99.500l7 15h27l7-15', [[69.5, 26.5, 21.5], [69.5, 26.5, 12.5], [69.5, 26.5, 5.5]], 29, 134],
        ];
        document.getElementById('shapes').innerHTML = shapes.map(([name, d, circles, x, y], i) => `
            <button class="h-[159px] border border-r-[#9a9a9a] border-b-[#9a9a9a] pt-2 pl-1.5 ${i === 0 ? 'border-t-[#00ffff] border-l-[#00ffff] bg-[#00ffff]' : 'border-t-white border-l-white'} flex items-start">
                <svg class="size-[140px] bg-[#008080]" viewBox="0 0 140 140">
                    <g fill="none" stroke="#fff" shape-rendering="crispEdges"><path d="${d}"/>${circles.map(([cx, cy, r]) => `<circle cx="${cx}" cy="${cy}" r="${r}"/>`).join('')}</g>
                    <text x="${x}" y="${y}" font-size="14" fill="#fff">${name}</text>
                </svg>
            </button>`).join('');

        // Rebar dots along the section outline
        const dots = [[1110, 532], [1119, 532], [1129, 532], [1138, 532], [1148, 532], [1159, 532], [1170, 532], [1181, 532],
            [1105, 543], [1101, 556], [1096, 566], [1092, 579], [1088, 592], [1185, 543], [1190, 556], [1194, 566], [1198, 579], [1203, 592]];
        document.getElementById('dots').setAttribute('d', dots.map(([x, y]) => `M${x - 1} ${y}h3v1h-3zM${x} ${y - 1}h1v3h-1z`).join(''));

        document.querySelectorAll('#status [data-text]').forEach(el => { el.innerHTML = mixed(el.dataset.text); });
    </script>
</body>
</html>
